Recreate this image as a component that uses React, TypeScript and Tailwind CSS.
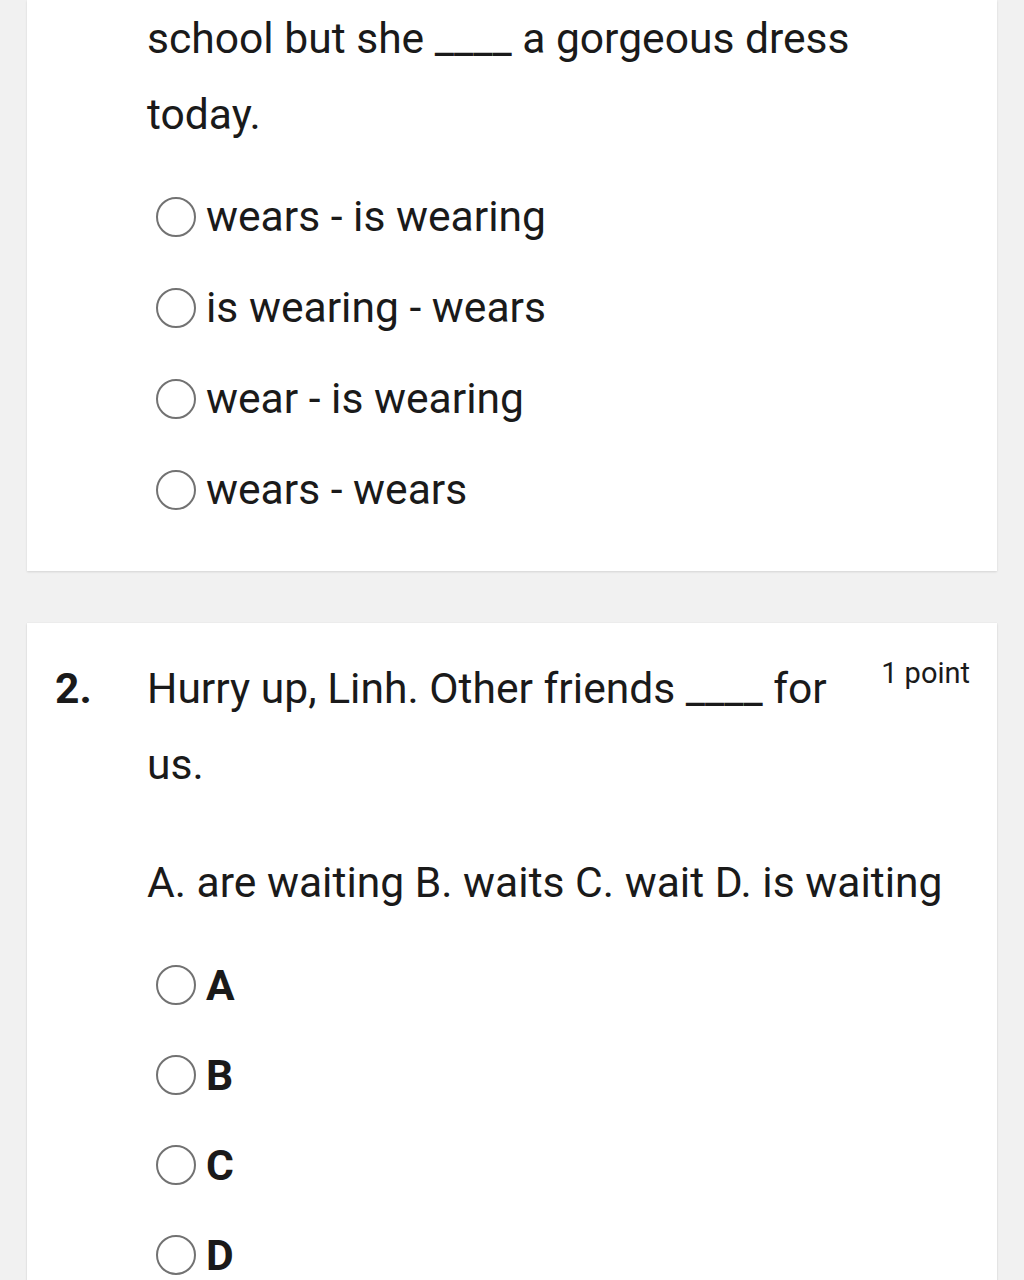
const q1Options = ['wears - is wearing', 'is wearing - wears', 'wear - is wearing', 'wears - wears'];
const q2Options = ['A', 'B', 'C', 'D'];

function Radio() {
  return <span className="w-[40px] h-[40px] shrink-0 rounded-full border-[2.5px] border-[#727272] bg-white" />;
}

function Option({ label, bold, h }: { label: string; bold?: boolean; h: string }) {
  return (
    <div className={`flex items-center pl-[129px] ${h}`}>
      <Radio />
      <span className={`ml-[10px] text-[42.6px] leading-none text-[#1a1a1a] ${bold ? 'font-bold' : ''}`}>{label}</span>
    </div>
  );
}

export default function App() {
  return (
    <div className="h-[1280px] overflow-hidden bg-[#f1f1f1] px-[27px] font-['Roboto',sans-serif]">
      {/* question 1, scrolled so its top is off screen */}
      <div className="bg-white shadow-[0_1px_2px_rgba(0,0,0,0.12)] pb-[36px]">
        <div className="pl-[120px] text-[42.6px] leading-[76px] text-[#1a1a1a]">
          <div>school but she ____ a gorgeous dress</div>
          <div>today.</div>
        </div>
        <div className="mt-[19px]">
          {q1Options.map((o) => (
            <Option key={o} label={o} h="h-[91px]" />
          ))}
        </div>
      </div>

      <div className="mt-[52px] bg-white shadow-[0_1px_2px_rgba(0,0,0,0.12),0_0_1px_rgba(0,0,0,0.08)] pt-[27px] pb-[40px]">
        <div className="flex pl-[28px] pr-[27px] text-[#1a1a1a]">
          <div className="w-[92px] shrink-0 text-[42.6px] leading-[76px] font-bold">2.</div>
          <div className="flex-1 text-[42.6px] leading-[76px]">
            <div>Hurry up, Linh. Other friends ____ for</div>
            <div>us.</div>
          </div>
          <div className="text-[29px] leading-[46px] pl-4">1 point</div>
        </div>
        <div className="mt-[42px] pl-[120px] text-[42.6px] leading-[76px] text-[#1a1a1a]">
          A. are waiting B. waits C. wait D. is waiting
        </div>
        <div className="mt-[20px]">
          {q2Options.map((o) => (
            <Option key={o} label={o} bold h="h-[90px]" />
          ))}
        </div>
      </div>
    </div>
  );
}
